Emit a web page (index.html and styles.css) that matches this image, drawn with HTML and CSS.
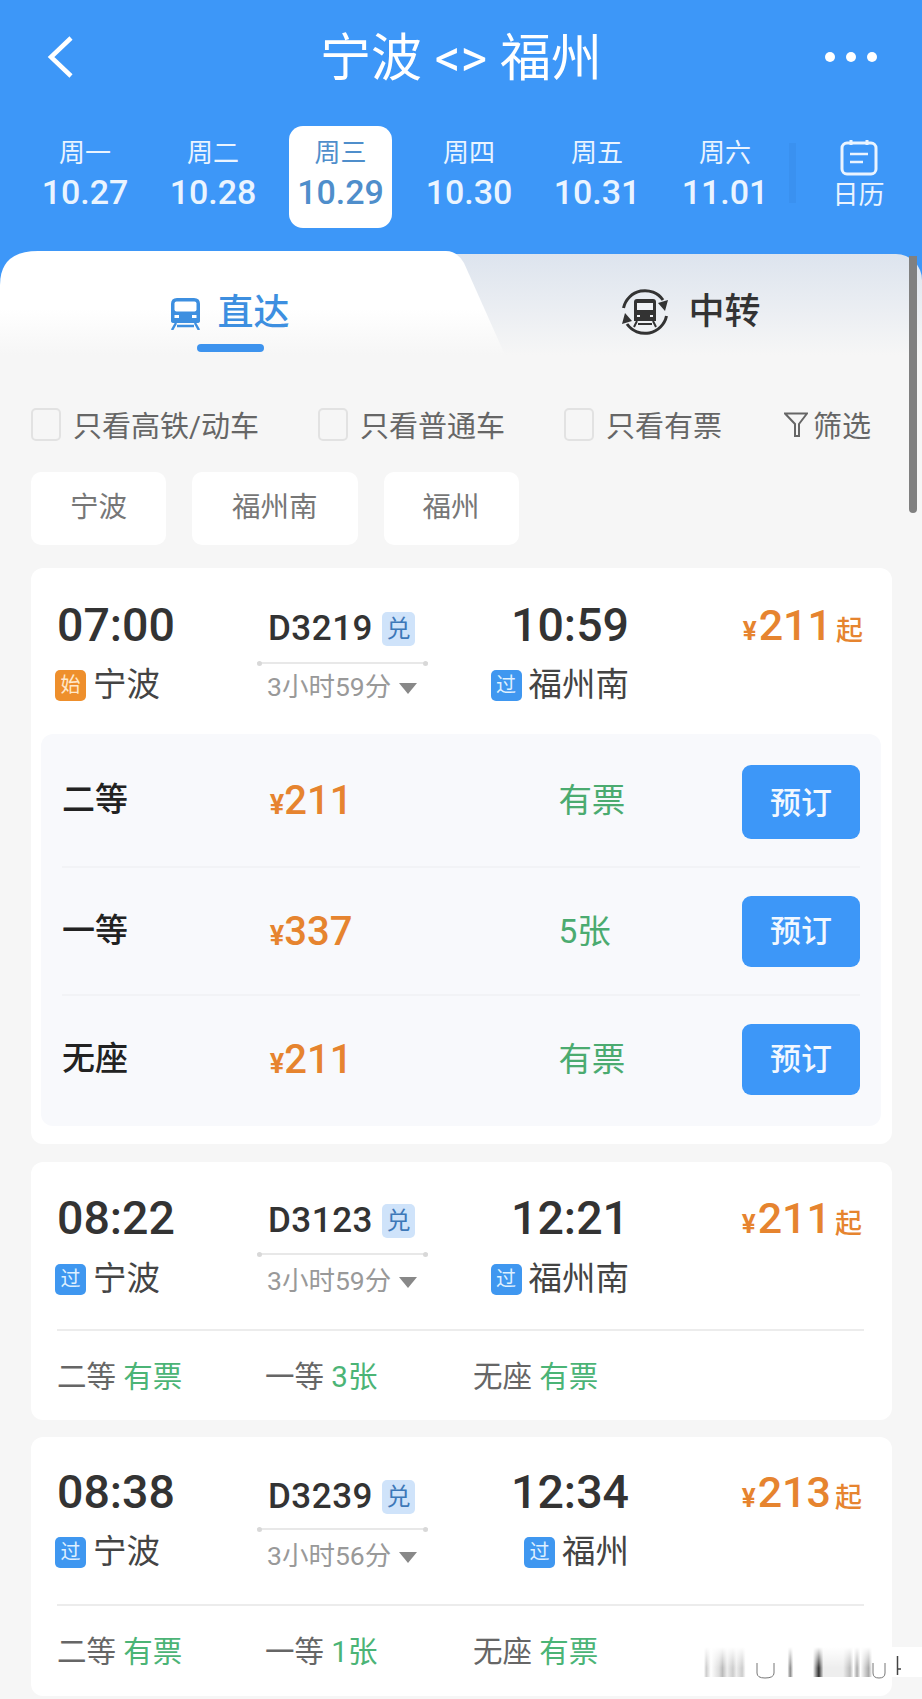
FILE: index.html
```html
<!DOCTYPE html>
<html>
<head>
<meta charset="utf-8">
<title>宁波 &lt;&gt; 福州</title>
<link rel="stylesheet" href="styles.css">
</head>

<body>

<div class="scroll-thumb"></div>

<header class="top-bar">
  <div class="title-row">
    <svg class="back-icon" width="30" height="44" viewBox="0 0 30 44"><path d="M25 3 L5 22 L25 41" fill="none" stroke="#fff" stroke-width="4.5"/></svg>
    <h1 class="route-title">宁波 &lt;&gt; 福州</h1>
    <div class="more-dots"><i></i><i></i><i></i></div>
  </div>
  <div class="date-row">
    <div class="date-item"><span class="week">周一</span><span class="date">10.27</span></div>
    <div class="date-item"><span class="week">周二</span><span class="date">10.28</span></div>
    <div class="date-item is-active"><span class="week">周三</span><span class="date">10.29</span></div>
    <div class="date-item"><span class="week">周四</span><span class="date">10.30</span></div>
    <div class="date-item"><span class="week">周五</span><span class="date">10.31</span></div>
    <div class="date-item"><span class="week">周六</span><span class="date">11.01</span></div>
    <div class="calendar-link">
      <svg width="38" height="37" viewBox="0 0 38 37"><rect x="2" y="4" width="34" height="31" rx="5" fill="none" stroke="#eaf4ff" stroke-width="3"/><path d="M11 1v5M27 1v5" stroke="#eaf4ff" stroke-width="3"/><path d="M10 15h18M10 23h13" stroke="#eaf4ff" stroke-width="2.5"/></svg>
      <span>日历</span>
    </div>
  </div>
</header>

<nav class="tabs">
  <div class="tab tab-direct">
    <div class="tab-label">
      <svg width="31" height="33" viewBox="0 0 31 33"><path d="M1 7 Q1 1 7 1 H24 Q30 1 30 7 V24 Q30 26 27 26 H4 Q1 26 1 24 Z" fill="#3d8fe0"/><rect x="4.500" y="4.500" width="22" height="10" rx="2" fill="#fff"/><rect x="4.500" y="18" width="4.500" height="3" fill="#fff"/><rect x="22" y="18" width="4.500" height="3" fill="#fff"/><path d="M6 26 L2 33 M25 26 L29 33 M7 29 H24" fill="none" stroke="#3d8fe0" stroke-width="2.500"/></svg>
      <span>直达</span>
    </div>
    <div class="tab-mark"></div>
  </div>
  <div class="tab tab-transfer">
    <div class="tab-label">
      <svg width="48" height="48" viewBox="0 0 48 48"><path d="M2.500 20 A22 22 0 0 1 42 12 M45.500 28 A22 22 0 0 1 6 36" fill="none" stroke="#333" stroke-width="3"/><path d="M37 15 L47 12 L44 23 Z M11 33 L1 36 L4 25 Z" fill="#333"/><path d="M13 14 Q13 11 16 11 H32 Q35 11 35 14 V33 H13 Z" fill="#333"/><rect x="16" y="15" width="16" height="7" fill="#f0f2f6"/><rect x="16" y="27" width="3" height="2" fill="#f0f2f6"/><rect x="29" y="27" width="3" height="2" fill="#f0f2f6"/><path d="M16 33 L13 39 M32 33 L35 39 M17 36 H31" fill="none" stroke="#333" stroke-width="2"/></svg>
      <span>中转</span>
    </div>
  </div>
</nav>

<main class="list">
  <div class="filter-row">
    <label class="check check-high"><i class="box"></i>只看高铁/动车</label>
    <label class="check check-normal"><i class="box"></i>只看普通车</label>
    <label class="check check-ticket"><i class="box"></i>只看有票</label>
    <div class="filter-link">
      <svg width="24" height="25" viewBox="0 0 24 25"><path d="M1 1.500 H23 L15 12 V24 H11 V12 Z" fill="none" stroke="#666" stroke-width="2"/></svg>
      筛选
    </div>
  </div>

  <div class="chip-row">
    <span class="chip">宁波</span>
    <span class="chip">福州南</span>
    <span class="chip">福州</span>
  </div>

  <section class="card card-open">
    <div class="train-head">
      <div class="stop">
        <div class="time">07:00</div>
        <div class="station"><i class="tag tag-start">始</i>宁波</div>
      </div>
      <div class="train">
        <div class="train-no">D3219<i class="redeem">兑</i></div>
        <div class="train-line"></div>
        <div class="duration">3小时59分<i class="caret"></i></div>
      </div>
      <div class="stop stop-end">
        <div class="time">10:59</div>
        <div class="station"><i class="tag">过</i>福州南</div>
      </div>
      <div class="price"><small>¥</small>211<em>起</em></div>
    </div>
    <div class="seat-panel">
      <div class="seat-row seat-row-first">
        <span class="seat-name">二等</span>
        <span class="seat-price"><small>¥</small>211</span>
        <span class="seat-left">有票</span>
        <button class="book">预订</button>
      </div>
      <div class="seat-row">
        <span class="seat-name">一等</span>
        <span class="seat-price"><small>¥</small>337</span>
        <span class="seat-left">5张</span>
        <button class="book">预订</button>
      </div>
      <div class="seat-row">
        <span class="seat-name">无座</span>
        <span class="seat-price"><small>¥</small>211</span>
        <span class="seat-left">有票</span>
        <button class="book">预订</button>
      </div>
    </div>
  </section>

  <section class="card">
    <div class="train-head">
      <div class="stop">
        <div class="time">08:22</div>
        <div class="station"><i class="tag">过</i>宁波</div>
      </div>
      <div class="train">
        <div class="train-no">D3123<i class="redeem">兑</i></div>
        <div class="train-line"></div>
        <div class="duration">3小时59分<i class="caret"></i></div>
      </div>
      <div class="stop stop-end">
        <div class="time">12:21</div>
        <div class="station"><i class="tag">过</i>福州南</div>
      </div>
      <div class="price"><small>¥</small>211<em>起</em></div>
    </div>
    <div class="seat-summary">
      <span>二等 <b>有票</b></span>
      <span>一等 <b>3张</b></span>
      <span>无座 <b>有票</b></span>
    </div>
  </section>

  <section class="card card-last">
    <div class="train-head">
      <div class="stop">
        <div class="time">08:38</div>
        <div class="station"><i class="tag">过</i>宁波</div>
      </div>
      <div class="train">
        <div class="train-no">D3239<i class="redeem">兑</i></div>
        <div class="train-line"></div>
        <div class="duration">3小时56分<i class="caret"></i></div>
      </div>
      <div class="stop stop-end">
        <div class="time">12:34</div>
        <div class="station"><i class="tag">过</i>福州</div>
      </div>
      <div class="price"><small>¥</small>213<em>起</em></div>
    </div>
    <div class="seat-summary">
      <span>二等 <b>有票</b></span>
      <span>一等 <b>1张</b></span>
      <span>无座 <b>有票</b></span>
    </div>
    <svg class="watermark" width="232" height="50" viewBox="0 0 232 50">
      <defs>
        <linearGradient id="wm-stripes">
          <stop offset="0.060" stop-color="#fff"/>
          <stop offset="0.070" stop-color="#ccc"/>
          <stop offset="0.090" stop-color="#fff"/>
          <stop offset="0.125" stop-color="#ddd"/>
          <stop offset="0.140" stop-color="#bbb"/>
          <stop offset="0.160" stop-color="#eee"/>
          <stop offset="0.185" stop-color="#ccc"/>
          <stop offset="0.200" stop-color="#eee"/>
          <stop offset="0.225" stop-color="#ccc"/>
          <stop offset="0.240" stop-color="#fff"/>
          <stop offset="0.420" stop-color="#fff"/>
          <stop offset="0.432" stop-color="#888"/>
          <stop offset="0.445" stop-color="#fff"/>
          <stop offset="0.530" stop-color="#fff"/>
          <stop offset="0.555" stop-color="#333"/>
          <stop offset="0.575" stop-color="#eee"/>
          <stop offset="0.660" stop-color="#eee"/>
          <stop offset="0.690" stop-color="#bbb"/>
          <stop offset="0.705" stop-color="#fff"/>
          <stop offset="0.720" stop-color="#aaa"/>
          <stop offset="0.735" stop-color="#fff"/>
          <stop offset="0.770" stop-color="#aaa"/>
          <stop offset="0.785" stop-color="#fff"/>
        </linearGradient>
        <linearGradient id="wm-fade" x2="0" y2="1">
          <stop offset="0" stop-color="#fff"/>
          <stop offset="0.700" stop-color="#fff" stop-opacity="0"/>
        </linearGradient>
      </defs>
      <rect y="8" width="232" height="30" fill="url(#wm-stripes)"/>
      <rect y="8" width="232" height="30" fill="url(#wm-fade)"/>
      <path d="M67 24 V34 Q67 39 75 39 Q84 39 84 34 V24 M183 24 V34 Q183 39 189 39 Q195 39 195 34 V24" fill="none" stroke="#777" stroke-width="1"/>
      <path d="M207.500 17 V36 M207.500 30 H211" fill="none" stroke="#444" stroke-width="1.500"/>
    </svg>
  </section>
</main>

</body>
</html>
```

FILE: styles.css
```css
* {
  margin: 0;
  padding: 0;
  box-sizing: border-box;
}

html, body {
  height: 1699px;
  overflow: hidden;
}

body {
  position: relative;
  font-family: Roboto, "Noto Sans CJK SC", sans-serif;
  background-color: #f6f6f6;
  color: #333;
}

i, em {
  font-style: normal;
}

/* header */
.top-bar {
  height: 251px;
  background-color: #3d97f8;
  color: #fff;
}

.title-row {
  position: relative;
  height: 126px;
  display: flex;
  align-items: center;
  justify-content: center;
  padding-bottom: 8px;
}

.back-icon {
  position: absolute;
  left: 46px;
  top: 35px;
}

.route-title {
  font-size: 51px;
  font-weight: 400;
  line-height: 60px;
}

.more-dots {
  position: absolute;
  right: 45px;
  top: 52px;
  display: flex;
  gap: 11px;
}
.more-dots i {
  width: 10px;
  height: 10px;
  border-radius: 50%;
  background-color: #fff;
}

.date-row {
  display: flex;
  padding-left: 21px;
}

.date-item {
  width: 128px;
  height: 102px;
  display: flex;
  flex-direction: column;
  align-items: center;
  padding-top: 11px;
  color: #eaf4ff;
}
.date-item .week {
  font-size: 26px;
  line-height: 32px;
}
.date-item .date {
  font-size: 34px;
  font-weight: 500;
  line-height: 42px;
  margin-top: 2px;
}
.date-item.is-active {
  width: 103px;
  margin: 0 13px 0 12px;
  background-color: #fff;
  border-radius: 14px;
  color: #4f8ecb;
}

.calendar-link {
  width: 133px;
  display: flex;
  flex-direction: column;
  align-items: center;
  padding: 13px 0 0 6px;
  font-size: 26px;
  line-height: 32px;
  color: #eaf4ff;
  background: linear-gradient(#3a91f0, #3a91f0) left 17px / 7px 60px no-repeat;
}
.calendar-link span {
  margin-top: 3px;
}

/* tabs */
.tabs {
  display: flex;
  height: 104px;
  background-color: #3d97f8;
}

.tab {
  display: flex;
  flex-direction: column;
  align-items: center;
}
.tab-label {
  display: flex;
  align-items: center;
  font-size: 36px;
  font-weight: 500;
  line-height: 48px;
}

.tab-direct {
  position: relative;
  z-index: 1;
  width: 505px;
  padding: 38px 45px 0 0;
  background: linear-gradient(#fff 55%, #f6f6f6);
  clip-path: path("M0 34 Q0 0 38 0 H446 Q457 0 464 12 L505 104 H0 Z");
  color: #3d8fe0;
}
.tab-direct .tab-label {
  gap: 16px;
}
.tab-mark {
  width: 67px;
  height: 8px;
  margin-top: 7px;
  border-radius: 4px;
  background-color: #3d93ee;
}

.tab-transfer {
  flex: 1;
  margin: 3px 0 0 -60px;
  padding: 34px 0 0 15px;
  background: linear-gradient(#dde4ee, #f6f6f6);
  border-top-right-radius: 26px;
}
.tab-transfer .tab-label {
  gap: 19px;
}

.scroll-thumb {
  position: absolute;
  z-index: 2;
  left: 909px;
  top: 256px;
  width: 8px;
  height: 257px;
  border-radius: 0 0 4px 4px;
  background-color: #808080;
}

/* list */
.list {
  padding: 0 30px 0 31px;
}

.filter-row {
  position: relative;
  display: flex;
  align-items: center;
  height: 54px;
  font-size: 29px;
  color: #666;
  margin-top: 42px;
}
.check {
  display: flex;
  align-items: center;
  gap: 12px;
}
.check-high { width: 287px; }
.check-normal { width: 246px; }
.check-ticket { width: 220px; }
.box {
  width: 30px;
  height: 33px;
  border: 2px solid #e2e2e2;
  border-radius: 5px;
}
.filter-link {
  display: flex;
  align-items: center;
  gap: 5px;
}

.chip-row {
  display: flex;
  gap: 26px;
  margin-top: 21px;
}
.chip {
  height: 73px;
  line-height: 72px;
  padding: 0 39px;
  font-size: 28.500px;
  color: #777;
  background-color: #fff;
  border-radius: 10px;
}
.chip:nth-child(2) {
  padding: 0 40px;
}

.card {
  margin-top: 18px;
  background-color: #fff;
  border-radius: 12px;
  padding: 0 28px 0 26px;
  height: 258px;
}
.card-open {
  margin-top: 23px;
  height: 576px;
  padding-left: 10px;
  padding-right: 11px;
}
.card-last {
  position: relative;
  height: 259px;
  margin-top: 17px;
}

.train-head {
  display: grid;
  grid-template-columns: 202px 171px 201px 1fr;
  height: 167px;
  margin-left: -2px;
  padding: 29px 2px 0 0;
}
.card-open .train-head {
  margin-left: 0;
  padding: 30px 18px 0 14px;
  height: 166px;
}
.card-last .train-head {
  padding-top: 28px;
}

.time {
  font-size: 46.500px;
  font-weight: 500;
  line-height: 54px;
  padding-left: 2px;
}
.station {
  display: flex;
  align-items: center;
  margin-top: 11px;
  font-size: 33.500px;
  line-height: 46px;
  color: #444;
}
.card-open .station,
.card-last .station {
  margin-top: 10px;
}
.tag {
  width: 31px;
  height: 31px;
  margin-right: 7px;
  border-radius: 5px;
  background-color: #3f97f0;
  color: #dff0ff;
  font-size: 20px;
  line-height: 30px;
  text-align: center;
}
.tag-start {
  background-color: #ee8f2c;
  color: #ffe9cc;
}
.stop-end {
  display: flex;
  flex-direction: column;
  align-items: flex-end;
}

.train {
  display: flex;
  flex-direction: column;
}
.train-no {
  display: flex;
  align-items: center;
  padding: 12px 0 0 11px;
  font-size: 35px;
  font-weight: 500;
  letter-spacing: .5px;
  line-height: 36px;
}
.card-open .train-no { padding-top: 13px; }
.card-last .train-no { padding-top: 14px; }
.redeem {
  width: 33px;
  height: 34px;
  margin-left: 9px;
  border-radius: 5px;
  background-color: #cfe3fa;
  color: #3d78b8;
  font-size: 24px;
  font-weight: 400;
  letter-spacing: 0;
  line-height: 34px;
  text-align: center;
}
.train-line {
  position: relative;
  height: 2px;
  margin-top: 14px;
  background-color: #e8e8e8;
}
.card-open .train-line { margin-top: 15px; }
.card-last .train-line { margin-top: 13px; }
.train-line::before,
.train-line::after {
  content: "";
  position: absolute;
  top: -1.500px;
  width: 5px;
  height: 5px;
  border-radius: 50%;
  background-color: #d8d8d8;
}
.train-line::before { left: 0; }
.train-line::after { right: 0; }
.duration {
  display: flex;
  align-items: center;
  margin-top: 8px;
  padding-left: 10px;
  font-size: 26.500px;
  line-height: 36px;
  color: #999;
}
.card-open .duration { margin-top: 5px; }
.caret {
  margin: 2px 0 0 8px;
  border-style: solid;
  border-width: 11px 9px 0;
  border-color: #888 transparent transparent;
}

.price {
  text-align: right;
  color: #e6842f;
  font-size: 43px;
  font-weight: 500;
  line-height: 54px;
}
.price small {
  font-size: 26px;
  font-weight: 700;
  margin-right: 2px;
}
.price em {
  font-size: 27px;
  margin-left: 4px;
}

/* open train: seat table */
.seat-panel {
  height: 392px;
  padding: 0 21px;
  background-color: #f8f9fc;
  border-radius: 12px;
}
.seat-row {
  display: flex;
  align-items: center;
  height: 128px;
  border-top: 2px solid #f2f3f6;
}
.seat-row-first {
  height: 132px;
  border-top: 0;
}
.seat-name {
  width: 208px;
  margin-bottom: 6px;
  font-size: 33px;
  font-weight: 500;
  color: #222;
}
.seat-price {
  width: 289px;
  color: #e6842f;
  font-size: 40px;
  font-weight: 500;
}
.seat-price small {
  font-size: 27px;
  font-weight: 700;
}
.seat-left {
  width: 184px;
  margin-bottom: 6px;
  font-size: 33.500px;
  color: #4bab70;
}
.book {
  width: 118px;
  height: 71px;
  padding-bottom: 6px;
  border: 0;
  border-radius: 9px;
  background-color: #3d97f8;
  color: #f2f8ff;
  font-family: inherit;
  font-size: 31px;
  font-weight: 500;
}
.seat-row-first .book {
  height: 74px;
  margin-top: 4px;
  padding-bottom: 4px;
}

/* closed train: seat summary */
.seat-summary {
  display: grid;
  grid-template-columns: 208px 208px 1fr;
  height: 89px;
  padding-top: 23px;
  border-top: 2px solid #ececec;
  font-size: 29.500px;
  line-height: 46px;
  color: #666;
}
.seat-summary b {
  font-weight: 400;
  color: #4bb476;
}

.watermark {
  position: absolute;
  left: 659px;
  top: 202px;
}
```
